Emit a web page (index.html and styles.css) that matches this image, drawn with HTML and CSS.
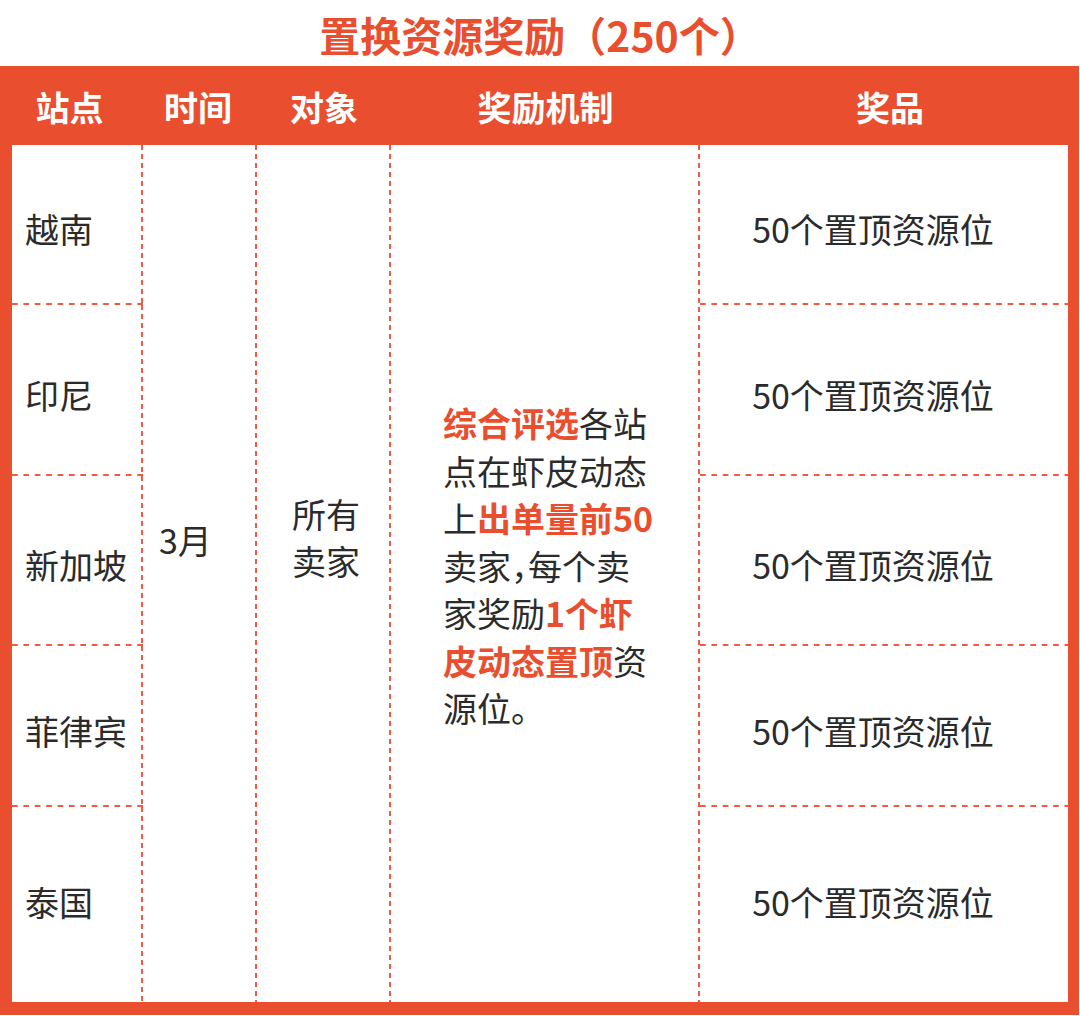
FILE: index.html
```html
<!DOCTYPE html>
<html lang="zh-CN">
<head>
<meta charset="utf-8">
<title>置换资源奖励</title>
<link rel="stylesheet" href="styles.css">
</head>
<body>
<div class="page">
  <h1 class="title">置换资源奖励（250个）</h1>
  <div class="frame">
    <div class="grid">
      <div class="th th-site">站点</div>
      <div class="th th-time">时间</div>
      <div class="th th-target">对象</div>
      <div class="th th-rule">奖励机制</div>
      <div class="th th-prize">奖品</div>

      <div class="cell site r1 vline hline">越南</div>
      <div class="cell site r2 vline hline">印尼</div>
      <div class="cell site r3 vline hline">新加坡</div>
      <div class="cell site r4 vline hline">菲律宾</div>
      <div class="cell site r5 vline">泰国</div>

      <div class="cell time vline">3月</div>
      <div class="cell target vline">所有<br>卖家</div>
      <div class="cell rule vline">
        <p class="rule-text"><b class="hl">综合评选</b>各站<br>点在虾皮动态<br>上<b class="hl">出单量前50</b><br>卖家<span class="comma">，</span>每个卖<br>家奖励<b class="hl">1个虾<br>皮动态置顶</b>资<br>源位。</p>
      </div>

      <div class="cell prize r1 hline">50个置顶资源位</div>
      <div class="cell prize r2 hline">50个置顶资源位</div>
      <div class="cell prize r3 hline">50个置顶资源位</div>
      <div class="cell prize r4 hline">50个置顶资源位</div>
      <div class="cell prize r5">50个置顶资源位</div>
    </div>
  </div>
</div>
</body>
</html>
```

FILE: styles.css
```css
* { box-sizing: border-box; }

html, body {
  margin: 0;
  padding: 0;
  background: #ffffff;
}

body {
  font-family: "Noto Sans CJK SC", "Noto Sans", sans-serif;
  color: #2b2b2b;
}

.page {
  width: 1080px;
  height: 1016px;
  overflow: hidden;
}

.title {
  margin: 0;
  height: 66px;
  line-height: 68px;
  text-align: center;
  font-size: 41px;
  font-weight: 700;
  color: #e94e2f;
}

.frame {
  width: 1079px;
  background: #e94e2f;
  padding: 0 11px 13px 12px;
}

.grid {
  display: grid;
  grid-template-columns: 131px 114px 134px 309px 368px;
  grid-template-rows: 79px 160px 171px 170px 161px 195px;
}

.th {
  grid-row: 1;
  display: flex;
  align-items: center;
  justify-content: center;
  color: #ffffff;
  font-size: 34px;
  font-weight: 700;
  padding-top: 2px;
}
.th-site { grid-column: 1; padding-right: 16px; }
.th-time { grid-column: 2; padding-right: 4px; }
.th-target { grid-column: 3; }
.th-rule { grid-column: 4; }
.th-prize { grid-column: 5; padding-left: 12px; }

.cell {
  background-color: #ffffff;
  font-size: 34px;
  font-weight: 400;
  line-height: 47.5px;
  display: flex;
  align-items: center;
}

.vline {
  background-image: linear-gradient(to bottom, #ef5a43 0, #ef5a43 5px, transparent 5px, transparent 9px);
  background-size: 2px 9px;
  background-repeat: repeat-y;
  background-position: right top;
}

.hline {
  background-image: linear-gradient(to right, #ef5a43 0, #ef5a43 5.5px, transparent 5.5px, transparent 11.4px);
  background-size: 11.4px 2px;
  background-repeat: repeat-x;
  background-position: left bottom;
}

.vline.hline {
  background-image:
    linear-gradient(to bottom, #ef5a43 0, #ef5a43 5px, transparent 5px, transparent 9px),
    linear-gradient(to right, #ef5a43 0, #ef5a43 5.5px, transparent 5.5px, transparent 11.4px);
  background-size: 2px 9px, 11.4px 2px;
  background-repeat: repeat-y, repeat-x;
  background-position: right top, left bottom;
}

.r1 { grid-row: 2; }
.r2 { grid-row: 3; }
.r3 { grid-row: 4; }
.r4 { grid-row: 5; }
.r5 { grid-row: 6; }

.site {
  grid-column: 1;
  padding-left: 13px;
  padding-top: 8px;
}

.prize {
  grid-column: 5;
  justify-content: center;
  padding-right: 22px;
  padding-top: 8px;
}

.site.r5,
.prize.r5 {
  padding-top: 0;
  padding-bottom: 6px;
}

.time {
  grid-column: 2;
  grid-row: 2 / 7;
  padding-left: 16px;
  padding-bottom: 67px;
}

.target {
  grid-column: 3;
  grid-row: 2 / 7;
  justify-content: center;
  text-align: center;
  padding-left: 4px;
  padding-bottom: 73px;
}

.rule {
  grid-column: 4;
  grid-row: 2 / 7;
  padding-left: 52px;
  padding-bottom: 16px;
}

.rule-text {
  margin: 0;
  font-size: 34px;
  line-height: 47.5px;
}

.hl {
  color: #e94e2f;
  font-weight: 700;
}

.comma {
  font-feature-settings: "halt";
}
```
